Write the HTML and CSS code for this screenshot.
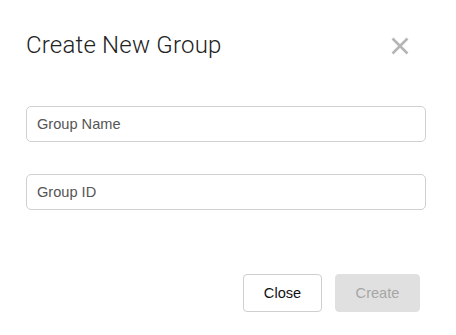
FILE: index.html
```html
<!DOCTYPE html>
<html>
<head>
<meta charset="utf-8">
<link rel="stylesheet" href="styles.css">
</head>
<body>
<div class="dialog">
  <div class="header">
    <h1 class="title">Create New Group</h1>
    <button class="close-x" aria-label="Close">
      <svg width="18" height="18" viewBox="0 0 18 18"><path d="M1.5 1.5 L16.5 16.5 M16.5 1.5 L1.5 16.5" stroke="#b5b5b5" stroke-width="2.6" fill="none"/></svg>
    </button>
  </div>
  <div class="fields">
    <input class="field" type="text" placeholder="Group Name">
    <input class="field" type="text" placeholder="Group ID">
  </div>
  <div class="footer">
    <button class="btn btn-close">Close</button>
    <button class="btn btn-create" disabled>Create</button>
  </div>
</div>
</body>
</html>
```
FILE: styles.css
```css
html, body { margin: 0; padding: 0; background: #fff; }
body { font-family: "Liberation Sans", Arial, sans-serif; }
.dialog { width: 456px; height: 335px; box-sizing: border-box; padding: 31px 30px 0 26px; }
.header { display: flex; justify-content: space-between; align-items: center; height: 28px; }
.title { margin: 0; font-family: Roboto, sans-serif; font-weight: 300; font-size: 24px; line-height: 28px; color: #222; letter-spacing: 0.2px; }
.close-x { border: 0; background: none; padding: 0; margin: 1px 17px 0 0; width: 18px; height: 18px; display: flex; }
.fields { display: flex; flex-direction: column; gap: 32px; margin-top: 47px; }
.field { box-sizing: border-box; width: 400px; height: 36px; border: 1px solid #d0d0d0; border-radius: 5px; padding: 0 10px; font-family: "Liberation Sans", Arial, sans-serif; font-size: 14.6px; color: #555; outline: none; }
.field::placeholder { color: #555; }
.footer { display: flex; justify-content: flex-end; gap: 13px; margin-top: 64px; margin-right: 6px; }
.btn { box-sizing: border-box; height: 38px; border-radius: 4px; font-family: "Liberation Sans", Arial, sans-serif; font-size: 14.6px; padding: 0; }
.btn-close { width: 79px; background: #fff; border: 1px solid #cfcfcf; color: #111; }
.btn-create { width: 85px; background: #e0e0e0; border: 1px solid #e0e0e0; color: #a6a6a6; }
```
